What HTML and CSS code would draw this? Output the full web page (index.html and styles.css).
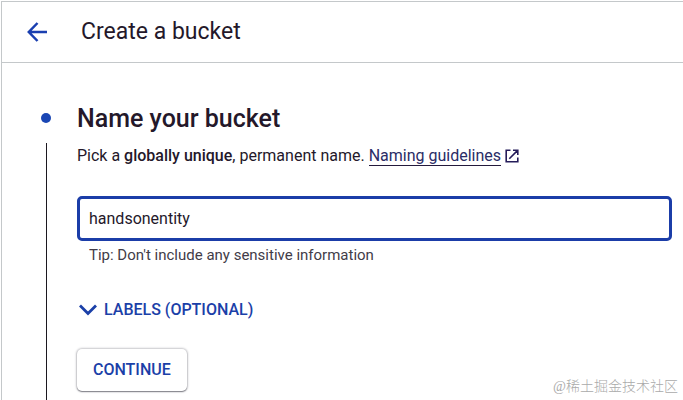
FILE: index.html
```html
<!DOCTYPE html>
<html lang="en">

<head>
    <meta charset="UTF-8">
    <meta name="viewport" content="width=device-width, initial-scale=1.0">
    <title>Create a bucket</title>
    <link rel="stylesheet" href="styles.css">
</head>

<body>
    <div class="page">
        <header class="page-header">
            <a class="back-link" href="#" aria-label="Back">
                <svg width="20" height="20" viewBox="0 0 20 20" fill="none" stroke="currentColor" stroke-width="2.5">
                    <path d="M20 10H2M10.5 1L1.8 10l8.7 9" />
                </svg>
            </a>
            <h1>Create a bucket</h1>
        </header>

        <main class="step">
            <div class="step-rail">
                <span class="step-dot"></span>
                <span class="step-line"></span>
            </div>

            <form class="step-content">
                <h2>Name your bucket</h2>
                <p class="step-description">
                    Pick a <strong>globally unique</strong>, permanent name.
                    <a class="guide-link" href="#"><span>Naming guidelines</span><svg width="14" height="14" viewBox="0 0 14 14" fill="none" stroke="currentColor" stroke-width="1.6">
                            <path d="M5.5 1.2H1.2v11.6h11.6V8.5M8 1.2h4.8V6M12.6 1.4L4.3 9.7" />
                        </svg></a>
                </p>

                <input class="name-input" type="text" value="handsonentity" aria-label="Bucket name" aria-describedby="name-tip">
                <p class="name-tip" id="name-tip">Tip: Don't include any sensitive information</p>

                <button class="labels-button" type="button">
                    <svg width="18" height="12" viewBox="0 0 18 12" fill="none" stroke="currentColor" stroke-width="2.8">
                        <path d="M1 1.5l8 8 8-8" />
                    </svg>
                    LABELS (OPTIONAL)
                </button>
                <button class="continue-button" type="button">CONTINUE</button>
            </form>
        </main>

        <div class="watermark" lang="zh">@稀土掘金技术社区</div>
    </div>
</body>

</html>
```

FILE: styles.css
```css
* {
    margin: 0;
    padding: 0;
    box-sizing: border-box;
}

body {
    font-family: Roboto, "Noto Sans CJK SC", sans-serif;
    font-size: 16px;
    line-height: 24px;
    color: #24182a;
    background-color: #fff;
    padding: 1px 0 0 1px;
}

.page {
    display: flex;
    flex-direction: column;
    position: relative;
    min-height: calc(100vh - 1px);
    border-top: 1px solid #c4c8ca;
    border-left: 1px solid #c4c8ca;
}

.page-header {
    display: flex;
    align-items: center;
    gap: 34px;
    padding: 15px 25px;
    border-bottom: 1px solid #c4c8ca;
}

.page-header h1 {
    font-size: 23px;
    font-weight: 400;
    line-height: 30px;
}

.back-link {
    display: flex;
    color: #1a3fb0;
}

.step {
    display: flex;
    flex: 1;
    gap: 26px;
    padding: 0 11px 0 39px;
}

.step-rail {
    display: flex;
    flex-direction: column;
    align-items: center;
    width: 10px;
    padding-top: 50px;
}

.step-dot {
    width: 10px;
    height: 10px;
    border-radius: 50%;
    background-color: #1a46b4;
}

.step-line {
    flex: 1;
    width: 1px;
    margin-top: 20px;
    background-color: #1c1820;
}

.step-content {
    display: flex;
    flex: 1;
    flex-direction: column;
    align-items: flex-start;
    padding: 40px 0 8px;
}

.step-content h2 {
    font-size: 25px;
    font-weight: 500;
    line-height: 32px;
    margin-bottom: 9px;
}

.step-description strong {
    font-weight: 500;
}

.guide-link {
    color: #2a2c66;
    text-decoration: none;
}

.guide-link span {
    border-bottom: 1px solid #241a3c;
}

.guide-link svg {
    margin-left: 4px;
    vertical-align: -2px;
    color: #251c5a;
}

.name-input {
    width: 100%;
    height: 45px;
    margin-top: 28px;
    padding: 0 9px;
    border: 3px solid #1b3da8;
    border-radius: 5px;
    outline: none;
    background-color: #fff;
    color: inherit;
    font: inherit;
}

.name-tip {
    margin: 4px 0 0 12px;
    font-size: 15px;
    line-height: 20px;
    color: #423c48;
}

.labels-button,
.continue-button {
    border: none;
    background-color: #fff;
    color: #1b40a8;
    font: inherit;
    font-weight: 500;
    cursor: pointer;
}

.labels-button {
    display: flex;
    align-items: center;
    gap: 7px;
    margin: 33px 0 0 2px;
}

.continue-button {
    height: 42px;
    margin-top: 27px;
    padding: 0 16px;
    border-radius: 5px;
    box-shadow: 0 1px 1px #85858c, 0 0 2px 1px #c8c8cc;
}

.watermark {
    position: absolute;
    right: 5px;
    bottom: 3px;
    font-family: "Liberation Serif", "Noto Sans CJK SC", serif;
    font-size: 14px;
    font-weight: 300;
    line-height: 20px;
    color: #aaa;
}
```
